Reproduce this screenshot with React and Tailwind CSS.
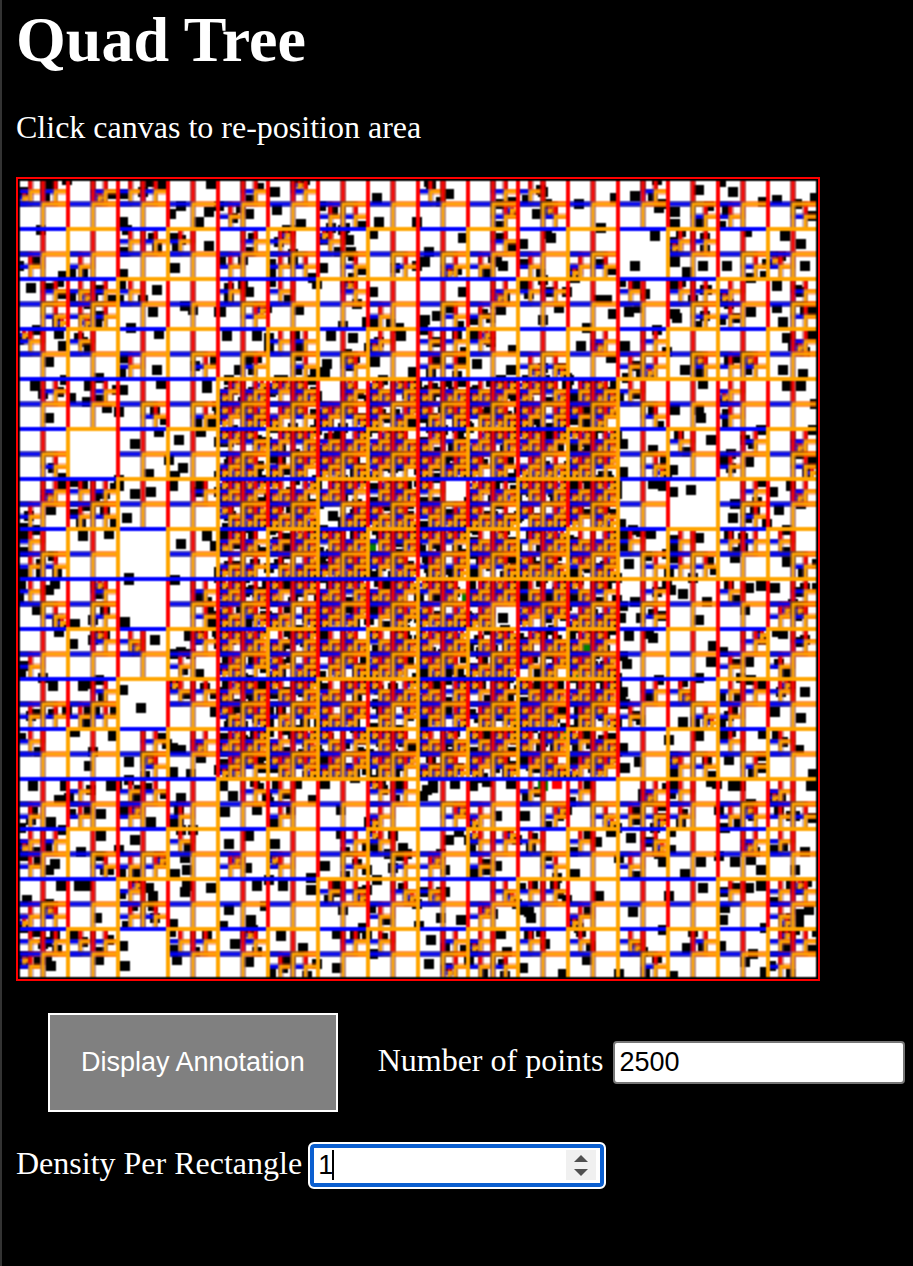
import { useEffect, useRef, useState } from "react";

const SIZE = 400;
const CELL = 12.5;
const COLORS = ["black", "red", "blue", "orange"];

// One character per 12.5 unit cell: S holds several points and is divided again.
const CELLS = [
  "SS.SSS...S.S....S..SS....S......",
  "........S...SS.....S.S.....SS..S",
  "....SSS..SS.S......S......SS....",
  "S.S.....S.SS.S.S.SS.S.SS.....SS.",
  ".SSSS...S.S..S.....SSS..S.SSS..S",
  ".SSS.....S....S..SS........SS..S",
  "S.S.......SS..S.SSS....S.S.....S",
  "....S..S.S.S.S..SS..SS..SS.SSS..",
  ".S.S....SSSS.SSSSSSSSSSSS...S...",
  ".....S.SSSSSSSSSSSSSSSSS.S..S...",
  "........SSSSSSSSSSSSSSSS..S..S.S",
  ".S......SSSSSSSSSSSSSSSS.S..S..S",
  ".SSS...SSSSSSSSSS.SSSSSS.....S.S",
  "S.SS....SSSS.SSSSSSSSSSS.....S..",
  "S.......SSSSSSSSSSSSSSSSS.S.SSS.",
  "SS......SSSSSSSSSSSSSSSS.SSS...S",
  "S..S...SSSSSSSSSSSSSSSSS.S..S..S",
  ".S.S...SSSSSSSSSSSS.SSSS.S....SS",
  "...SS..SSSSSSSSSSSSSSSSS.....S.S",
  "S.....S.SSSSSSSSSSSSSSSS....S.S.",
  "...S..SSSSSSSSSSSSSSSSSS.SS.SSS.",
  "SSSS....SSSSSSSSSSSSSSSSS..SS...",
  "S....S.SSSSSSSSSSSSSSSSS....S.S.",
  ".....S..SSSSSSSSSSSSSSSS..SS.S..",
  "..S.SS...SS...SS....S.S..SS...S.",
  "S.S.S.S...S...S..SS..S.SSSS.SSSS",
  "SS....S......SS...SSS.S..S...SS.",
  "S..SSS..S.S..S.SS.S..S..S.......",
  "....S.......SS.SS..SSS......S.SS",
  "SS..SS........S...S...S.......S.",
  "SSSS..SS.S...SS..SS.S.S.S..S..SS",
  "S.........SS.....SSS.....S....S.",
];

// 25 unit squares that stay whole.
const WHOLE = ["2,10", "4,14", "4,16", "4,20", "4,30", "24,2", "26,12"];

// Single points, grouped by 100 unit block: [blockX, blockY, x, y, x, y, ...]
const POINTS = [
  [0, 0, 96, 2, 95, 16, 90, 21, 76, 17, 81, 13, 95, 33, 52, 21, 6, 54, 69, 55, 67, 66, 78, 44, 56, 74, 70, 77, 20, 77, 22, 83, 15, 91, 69, 95, 22, 48, 52, 47, 83, 63, 87, 65, 78, 29, 100, 66, 11, 25, 40, 99],
  [1, 0, 28, 6, 29, 15, 41, 22, 79, 9, 80, 21, 77, 27, 99, 21, 52, 44, 49, 52, 1, 66, 15, 56, 40, 65, 62, 73, 74, 71, 90, 74, 4, 78, 19, 78, 56, 78, 67, 79, 91, 78, 78, 91, 54, 92, 53, 96, 97, 96, 77, 56, 15, 17, 56, 24, 62, 25, 65, 30, 66, 36, 10, 95],
  [2, 0, 15, 7, 22, 29, 5, 36, 3, 41, 3, 70, 9, 68, 22, 56, 41, 65, 47, 85, 46, 95, 29, 92, 59, 17, 66, 29, 64, 27, 52, 32, 80, 12, 91, 24, 98, 9, 81, 83, 62, 70, 97, 67, 94, 60, 90, 60, 70, 64, 84, 74, 42, 43, 39, 41, 96, 89],
  [3, 0, 8, 8, 3, 83, 18, 28, 8, 43, 40, 5, 57, 6, 28, 16, 28, 22, 79, 10, 72, 11, 83, 28, 91, 32, 93, 43, 42, 43, 54, 43, 28, 41, 34, 46, 5, 66, 10, 64, 13, 57, 29, 69, 28, 67, 66, 66, 79, 64, 82, 71, 84, 79, 79, 53, 51, 1, 33, 95, 92, 97, 82, 95, 64, 26, 98, 9, 20, 14],
  [0, 1, 8, 3, 35, 3, 52, 5, 50, 16, 15, 19, 71, 2, 94, 4, 94, 1, 58, 32, 80, 30, 82, 44, 65, 47, 75, 40, 70, 26, 91, 26, 34, 11, 44, 14, 22, 54, 50, 50, 50, 53, 58, 57, 66, 56, 77, 53, 16, 65, 54, 69, 32, 78, 45, 77, 81, 82, 94, 78, 98, 83, 55, 99, 78, 100, 78, 48, 26, 9],
  [3, 1, 42, 2, 84, 3, 91, 3, 28, 15, 41, 19, 40, 15, 46, 30, 2, 32, 17, 35, 71, 25, 27, 45, 2, 46, 17, 52, 22, 53, 27, 56, 36, 55, 65, 41, 53, 40, 58, 62, 57, 69, 77, 56, 80, 65, 86, 53, 16, 77, 11, 76, 40, 79, 5, 92, 84, 91, 97, 40, 98, 12, 58, 89, 74, 72, 1, 72],
  [0, 2, 18, 2, 15, 5, 9, 15, 28, 22, 20, 26, 27, 32, 53, 21, 55, 0, 68, 30, 90, 47, 81, 36, 85, 28, 17, 53, 32, 53, 35, 52, 52, 55, 61, 64, 28, 76, 47, 78, 35, 93, 55, 91, 81, 85, 77, 84, 77, 96, 86, 97, 91, 89, 12, 49, 37, 86, 98, 66],
  [3, 2, 32, 7, 26, 5, 44, 11, 40, 20, 71, 3, 78, 4, 65, 4, 8, 11, 2, 13, 1, 19, 11, 19, 5, 28, 17, 29, 15, 27, 47, 33, 46, 41, 65, 41, 52, 36, 4, 42, 2, 38, 40, 49, 2, 56, 1, 59, 93, 56, 78, 66, 91, 69, 32, 71, 25, 80, 40, 78, 90, 85, 72, 77, 2, 84, 3, 94, 10, 91, 55, 90, 27, 96, 79, 26, 82, 27, 97, 97, 63, 15],
  [0, 3, 7, 3, 23, 3, 20, 10, 46, 3, 49, 3, 16, 21, 41, 17, 41, 28, 66, 21, 81, 9, 78, 22, 58, 30, 50, 35, 31, 36, 18, 42, 15, 45, 84, 45, 78, 47, 83, 39, 21, 53, 30, 53, 34, 53, 83, 56, 84, 53, 96, 54, 67, 58, 65, 54, 4, 60, 39, 69, 77, 72, 53, 93, 52, 83, 79, 90, 40, 90, 16, 93, 14, 90, 87, 25],
  [1, 3, 7, 8, 2, 3, 3, 16, 28, 22, 39, 2, 53, 2, 19, 15, 47, 10, 5, 32, 28, 32, 15, 28, 92, 34, 53, 43, 19, 53, 32, 53, 46, 55, 46, 49, 25, 50, 61, 27, 79, 35, 79, 50, 23, 63, 5, 65, 16, 70, 62, 65, 72, 74, 8, 82, 31, 78, 42, 84, 59, 77, 15, 91, 59, 94, 76, 64, 100, 73, 2, 73, 14, 44, 85, 37, 74, 45, 61, 15, 75, 21],
  [2, 3, 4, 5, 7, 4, 2, 8, 18, 2, 27, 3, 46, 2, 34, 1, 53, 18, 39, 18, 15, 30, 20, 26, 89, 31, 78, 47, 13, 45, 39, 43, 13, 56, 90, 58, 55, 66, 52, 65, 56, 69, 11, 69, 21, 70, 74, 60, 6, 80, 5, 92, 52, 94, 72, 97, 63, 82, 84, 90, 41, 77, 44, 86, 100, 97, 96, 26],
  [3, 3, 6, 29, 22, 41, 41, 41, 33, 47, 42, 54, 25, 58, 7, 66, 58, 41, 66, 40, 71, 45, 71, 53, 65, 54, 88, 45, 57, 3, 61, 3, 46, 1, 49, 2, 96, 3, 97, 0, 52, 70, 53, 64, 73, 74, 34, 84, 51, 83, 22, 75, 63, 91, 73, 96, 67, 87, 95, 65, 90, 71, 90, 67, 93, 36, 26, 26, 26, 35, 50, 38, 12, 7, 50, 15, 27, 98],
];

// Points found inside the query area.
const FOUND = [[272, 209], [248, 266], [247, 270], [272, 278], [279, 246], [234, 284], [262, 303], [284, 233], [191, 230], [176, 184], [265, 196], [224, 208]];

function createRandom(seed) {
  let state = seed;
  return () => {
    state = (state * 1664525 + 1013904223) % 4294967296;
    return state / 4294967296;
  };
}

function buildPoints() {
  const random = createRandom(2500);
  const clustered = [];
  CELLS.forEach((row, j) => {
    [...row].forEach((kind, i) => {
      if (kind !== "S") return;
      const dense = i >= 8 && i < 24 && j >= 8 && j < 24;
      const count = dense ? 6 + Math.floor(random() * 4) : 2 + Math.floor(random() * 1.5);
      for (let n = 0; n < count; n += 1) {
        clustered.push([(i + random()) * CELL, (j + random()) * CELL]);
      }
    });
  });
  const single = POINTS.flatMap(([bx, by, ...values]) => {
    const list = [];
    for (let n = 0; n < values.length; n += 2) {
      list.push([bx * 100 + values[n], by * 100 + values[n + 1]]);
    }
    return list;
  });
  single.push([157, 168], [242, 219]);
  return { clustered, single };
}

function strokeNode(ctx, x, y, size, points, color, depth, density) {
  let divided = depth < 5;
  if (depth === 4) divided = !WHOLE.includes(`${x / CELL},${y / CELL}`);
  if (depth >= 5) divided = points.length > density && depth < 7;
  if (divided) {
    const half = size / 2;
    [[0, 0], [1, 0], [0, 1], [1, 1]].forEach(([dx, dy], index) => {
      const cx = x + dx * half;
      const cy = y + dy * half;
      const inside = points.filter(([px, py]) => px >= cx && px < cx + half && py >= cy && py < cy + half);
      strokeNode(ctx, cx, cy, half, inside, COLORS[index], depth + 1, density);
    });
  }
  ctx.strokeStyle = color;
  ctx.strokeRect(x, y, size, size);
}

function drawTree(ctx, density) {
  const { clustered, single } = buildPoints();
  ctx.fillStyle = "white";
  ctx.fillRect(0, 0, SIZE, SIZE);
  ctx.fillStyle = "black";
  [...clustered, ...single].forEach(([x, y]) => {
    ctx.fillRect(Math.round(x - 2.5), Math.round(y - 2.5), 5, 5);
  });
  ctx.fillStyle = "green";
  FOUND.forEach(([x, y]) => ctx.fillRect(x - 2, y - 2, 5, 5));
  ctx.fillStyle = "red";
  ctx.fillRect(267, 300, 5, 5);
  ctx.lineWidth = 2;
  strokeNode(ctx, 0, 0, SIZE, clustered, "black", 0, density);
}

function QuadTreeCanvas({ density }) {
  const ref = useRef(null);
  useEffect(() => {
    drawTree(ref.current.getContext("2d"), density);
  }, [density]);
  return (
    <canvas
      ref={ref}
      width={SIZE}
      height={SIZE}
      aria-label="Quad tree"
      className="mt-8 block aspect-square w-full max-w-[804px] border-2 border-[#ff0000]"
    />
  );
}

export default function App() {
  const [count, setCount] = useState("2500");
  const [density, setDensity] = useState("1");
  const step = (amount) => setDensity(String(Math.max(1, Number(density) + amount)));

  return (
    <main className="min-h-screen border-l-2 border-[#333333] bg-black pr-2 pb-8 pl-3.5 font-['Liberation_Serif',serif] text-[32px] leading-9 text-white">
      <h1 className="pt-1 text-[64px] leading-[72px] font-bold">Quad Tree</h1>
      <p className="mt-[33px]">Click canvas to re-position area</p>
      <QuadTreeCanvas density={Math.max(1, Number(density) || 1)} />
      <div className="mt-8 flex items-center gap-10 pl-8">
        <button
          type="button"
          className="shrink-0 border-2 border-white bg-[#808080] px-[31px] py-8 font-['Liberation_Sans',sans-serif] text-[27px] leading-[31px]"
        >
          Display Annotation
        </button>
        <div className="flex min-w-0 flex-1 items-center gap-2.5">
          <label htmlFor="count" className="shrink-0 pb-1.5">Number of points</label>
          <input
            id="count"
            type="number"
            value={count}
            onChange={(event) => setCount(event.target.value)}
            className="h-[43px] w-full min-w-0 rounded-[4px] border-2 border-[#767676] bg-white px-1 font-['Liberation_Sans',sans-serif] text-[27px] text-black [appearance:textfield]"
          />
        </div>
      </div>
      <div className="mt-[30px] flex items-center gap-1.5">
        <label htmlFor="density" className="pb-1.5">Density Per Rectangle</label>
        <div className="relative w-[298px]">
          <input
            id="density"
            type="number"
            min="1"
            value={density}
            onChange={(event) => setDensity(event.target.value)}
            className="block h-[47px] w-full rounded-[6px] border-2 border-white bg-white px-2 font-['Liberation_Sans',sans-serif] text-[27px] text-black ring-4 ring-[#0b5fd0] outline-none ring-inset [appearance:textfield]"
          />
          <span className="absolute top-2 left-6 h-[30px] w-0.5 bg-black" />
          <div className="absolute top-2 right-2.5 flex h-[30px] w-[30px] flex-col bg-[#f0f0f0]">
            <button type="button" aria-label="Increase" onClick={() => step(1)} className="flex flex-1 items-end justify-center pb-[3px]">
              <svg width="14" height="7" viewBox="0 0 14 7" fill="#505050"><path d="M0 7L7 0L14 7Z" /></svg>
            </button>
            <button type="button" aria-label="Decrease" onClick={() => step(-1)} className="flex flex-1 items-start justify-center pt-1">
              <svg width="14" height="7" viewBox="0 0 14 7" fill="#505050"><path d="M0 0L7 7L14 0Z" /></svg>
            </button>
          </div>
        </div>
      </div>
    </main>
  );
}
